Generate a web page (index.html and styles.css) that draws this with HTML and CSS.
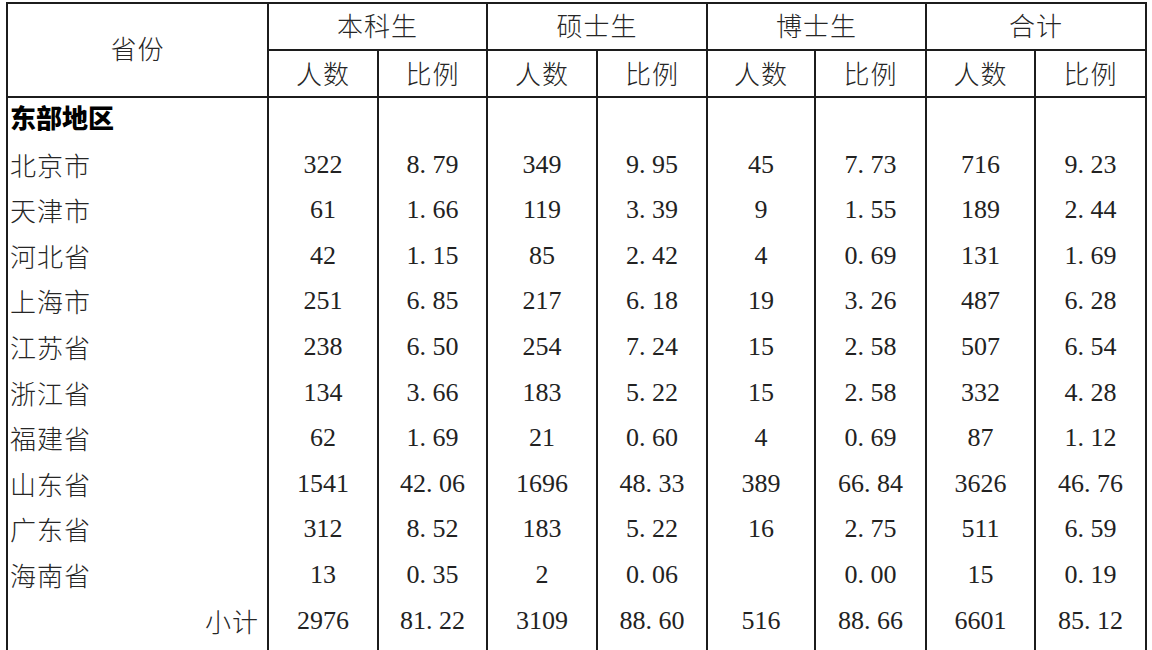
FILE: index.html
```html
<!DOCTYPE html>
<html lang="zh-CN">
<head>
<meta charset="utf-8">
<title>省份统计</title>
<link rel="stylesheet" href="styles.css">
</head>
<body>
<table class="stats">
  <colgroup>
    <col class="c-prov">
    <col class="c110"><col class="c109"><col class="c110"><col class="c110">
    <col class="c108"><col class="c111"><col class="c109"><col class="c111">
  </colgroup>
  <thead>
    <tr class="h1">
      <th rowspan="2" class="prov-head">省份</th>
      <th colspan="2">本科生</th>
      <th colspan="2">硕士生</th>
      <th colspan="2">博士生</th>
      <th colspan="2">合计</th>
    </tr>
    <tr class="h2">
      <th>人数</th><th>比例</th>
      <th>人数</th><th>比例</th>
      <th>人数</th><th>比例</th>
      <th>人数</th><th>比例</th>
    </tr>
  </thead>
  <tbody>
    <tr class="region"><td class="prov bold">东部地区</td><td></td><td></td><td></td><td></td><td></td><td></td><td></td><td></td></tr>
    <tr><td class="prov">北京市</td><td>322</td><td>8<span class="d">.</span>79</td><td>349</td><td>9<span class="d">.</span>95</td><td>45</td><td>7<span class="d">.</span>73</td><td>716</td><td>9<span class="d">.</span>23</td></tr>
    <tr><td class="prov">天津市</td><td>61</td><td>1<span class="d">.</span>66</td><td>119</td><td>3<span class="d">.</span>39</td><td>9</td><td>1<span class="d">.</span>55</td><td>189</td><td>2<span class="d">.</span>44</td></tr>
    <tr><td class="prov">河北省</td><td>42</td><td>1<span class="d">.</span>15</td><td>85</td><td>2<span class="d">.</span>42</td><td>4</td><td>0<span class="d">.</span>69</td><td>131</td><td>1<span class="d">.</span>69</td></tr>
    <tr><td class="prov">上海市</td><td>251</td><td>6<span class="d">.</span>85</td><td>217</td><td>6<span class="d">.</span>18</td><td>19</td><td>3<span class="d">.</span>26</td><td>487</td><td>6<span class="d">.</span>28</td></tr>
    <tr><td class="prov">江苏省</td><td>238</td><td>6<span class="d">.</span>50</td><td>254</td><td>7<span class="d">.</span>24</td><td>15</td><td>2<span class="d">.</span>58</td><td>507</td><td>6<span class="d">.</span>54</td></tr>
    <tr><td class="prov">浙江省</td><td>134</td><td>3<span class="d">.</span>66</td><td>183</td><td>5<span class="d">.</span>22</td><td>15</td><td>2<span class="d">.</span>58</td><td>332</td><td>4<span class="d">.</span>28</td></tr>
    <tr><td class="prov">福建省</td><td>62</td><td>1<span class="d">.</span>69</td><td>21</td><td>0<span class="d">.</span>60</td><td>4</td><td>0<span class="d">.</span>69</td><td>87</td><td>1<span class="d">.</span>12</td></tr>
    <tr><td class="prov">山东省</td><td>1541</td><td>42<span class="d">.</span>06</td><td>1696</td><td>48<span class="d">.</span>33</td><td>389</td><td>66<span class="d">.</span>84</td><td>3626</td><td>46<span class="d">.</span>76</td></tr>
    <tr><td class="prov">广东省</td><td>312</td><td>8<span class="d">.</span>52</td><td>183</td><td>5<span class="d">.</span>22</td><td>16</td><td>2<span class="d">.</span>75</td><td>511</td><td>6<span class="d">.</span>59</td></tr>
    <tr><td class="prov">海南省</td><td>13</td><td>0<span class="d">.</span>35</td><td>2</td><td>0<span class="d">.</span>06</td><td></td><td>0<span class="d">.</span>00</td><td>15</td><td>0<span class="d">.</span>19</td></tr>
    <tr class="last"><td class="prov sub">小计</td><td>2976</td><td>81<span class="d">.</span>22</td><td>3109</td><td>88<span class="d">.</span>60</td><td>516</td><td>88<span class="d">.</span>66</td><td>6601</td><td>85<span class="d">.</span>12</td></tr>
  </tbody>
</table>
</body>
</html>
```

FILE: styles.css
```css
html, body {
  margin: 0;
  padding: 0;
  background: #ffffff;
}
body {
  padding: 2px 0 0 6px;
  color: #1e1e1e;
  font-family: "Liberation Serif", "Noto Sans CJK SC", serif;
}
.stats {
  border-collapse: collapse;
  table-layout: fixed;
  width: 1141px;
  border: 2px solid #1c1c1c;
}
.c-prov { width: 261px; }
.c108 { width: 108px; }
.c109 { width: 109px; }
.c110 { width: 110px; }
.c111 { width: 111px; }

.stats th {
  font-family: "Noto Sans CJK SC", sans-serif;
  font-weight: 300;
  font-size: 26px;
  line-height: 1;
  letter-spacing: 1px;
  text-align: center;
  vertical-align: middle;
  padding: 0 0 4px 0;
  border: 2px solid #1c1c1c;
  color: #262626;
}
.h1, .h2 { height: 47px; }
.h2 th { padding-bottom: 2px; }
.prov-head { padding-bottom: 6px; }

.stats td {
  box-sizing: border-box;
  height: 45.6px;
  padding: 9px 0 0 0;
  text-align: center;
  vertical-align: top;
  font-size: 26px;
  line-height: 1;
  border-left: 2px solid #1c1c1c;
  border-right: 2px solid #1c1c1c;
  border-top: none;
  border-bottom: none;
  color: #222222;
}
.stats .last td { height: 70px; }
.d { margin-right: 0.25em; }

.stats td.prov {
  font-family: "Noto Sans CJK SC", sans-serif;
  font-weight: 300;
  text-align: left;
  padding-left: 2px;
  letter-spacing: 1px;
  color: #262626;
}
.stats td.bold {
  font-weight: 900;
  color: #000;
  letter-spacing: 0;
  padding-top: 6px;
}
.stats td.sub {
  text-align: right;
  padding-right: 8px;
}
```
